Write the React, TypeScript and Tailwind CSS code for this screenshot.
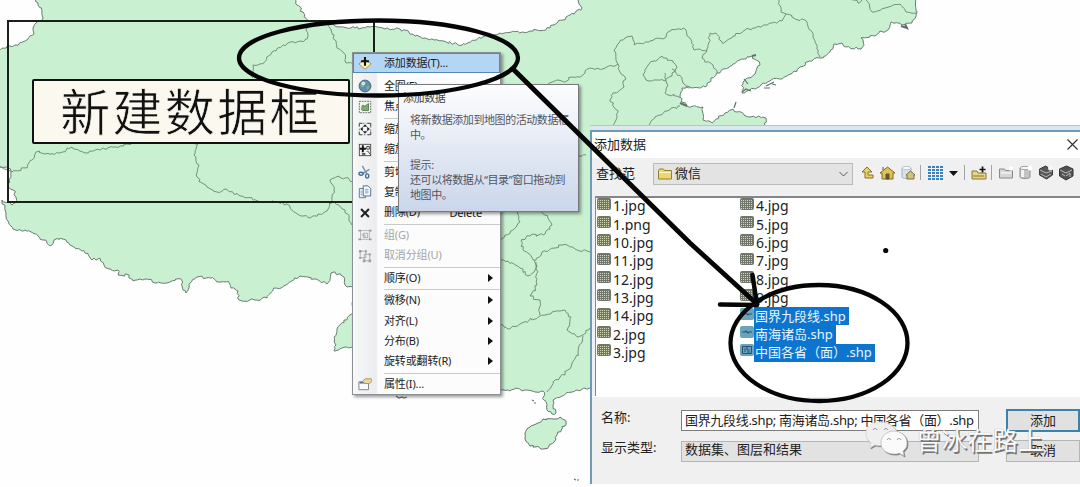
import React from "react";

type Pt = [number, number];

const parse = (s: string): Pt[] => s.trim().split(" ").map((p) => p.split(",").map(Number) as Pt);

// Adds small deterministic wiggles between survey points so borders look natural.
function rough(s: string, amount = 1.8): string {
  const pts = parse(s);
  let seed = pts.length * 7919 + Math.round(pts[0][0] * 31 + pts[0][1] * 17);
  const rnd = () => {
    seed = (seed * 16807) % 2147483647;
    return seed / 2147483647 - 0.5;
  };
  let d = `M${pts[0][0]} ${pts[0][1]}`;
  for (let i = 1; i < pts.length; i++) {
    const [x0, y0] = pts[i - 1];
    const [x1, y1] = pts[i];
    const len = Math.hypot(x1 - x0, y1 - y0);
    const n = len > 90 ? 1 : Math.max(1, Math.round(len / 2.5));
    for (let k = 1; k < n; k++) {
      const t = k / n;
      const x = x0 + (x1 - x0) * t + rnd() * amount * 1.6;
      const y = y0 + (y1 - y0) * t + rnd() * amount * 1.6;
      d += `L${x.toFixed(1)} ${y.toFixed(1)}`;
    }
    d += `L${x1} ${y1}`;
  }
  return d;
}

const land =
  "36,-2 38,5 42,13 43,18 35,24 33,28 34,34 27,40 15,45 -2,50 -2,166 8,168 11,172 8,186 13,190 16,197 17,202 12,205 8,202 2,200 6,213 8,221 13,229 25,230 38,236 43,240 50,246 54,240 60,238 66,240 70,245 85,253 92,260 100,258 104,265 110,269 118,270 118,275 129,275 133,281 140,279 145,279 155,283 170,282 181,279 183,290 186,293 189,288 190,283 197,277 210,278 220,282 228,281 231,288 238,291 239,300 255,300 267,298 273,290 286,285 300,276 315,279 327,284 331,273 335,272 344,277 347,287 354,287 353,313 344,320 337,329 334,337 336,345 334,351 345,347 354,348 400,391 500,390 510,391 516,388 525,390 535,392 543,391 544,400 547,410 552,414 556,413 553,405 553,400 562,396 572,392 590,388 600,388 600,126 765,126 766,118 750,117 737,112 733,109 725,113 712,123 703,120 703,107 687,106 680,97 682,88 687,86 692,88 705,87 711,78 717,73 728,68 740,60 752,56 760,65 755,74 747,78 743,84 742,93 750,90 770,81 787,76 800,67 813,60 820,58 830,52 834,44 842,43 846,47 861,49 864,45 861,38 875,36 880,31 886,31 891,22 902,25 912,23 916,15 916,-2 578,-2 579,4 582,8 570,15 558,22 550,28 530,31 500,33 485,36 462,45 440,41 425,38 412,34 400,29 385,29 370,27 355,28 340,27 322,23 308,21 303,12 297,5 295,-2";

const borders = [
  "307,26 307,39 300,41 288,43 272,52 262,64 253,65 253,78",
  "328,25 336,42 337,48 344,53 346,63 353,64",
  "0,166 10,171 27,168 36,152 50,154 60,153 72,147 85,153 100,150 115,147 127,144 135,143",
  "193,143 198,144 194,155 199,165 197,177 207,187 217,192 226,189 240,196 258,201 278,202 287,204 296,213 303,216 310,218 318,214 327,211 332,200 334,190 330,180 336,177 345,178 353,182",
  "335,203 345,210 349,218 352,225",
  "548,84 558,80 565,82 572,77 580,77 590,68 602,69 618,64 614,50 619,43 625,38 632,36 634,45 650,41 666,37 668,32 683,28 690,38 694,50 707,51 709,42 710,33 716,33 722,43 735,36 745,30 765,25 782,21 786,14 798,20 805,20 813,35 818,50 820,57",
  "779,0 781,12 786,14",
  "707,51 702,58 713,65 717,73",
  "618,64 620,72 625,77 624,87 613,93 610,100 618,112 613,126",
  "643,75 648,65 662,56 673,61 677,68 672,76 665,81 657,80 646,80 643,75",
  "665,73 668,85 665,93 680,98",
  "672,69 682,78 683,83 690,88",
  "649,125 655,117 667,111 680,106",
  "500,240 505,235 513,230 520,222 517,212",
  "540,210 548,218 552,225 545,234 530,236 521,240 523,250 535,260",
  "500,260 508,261 520,268 528,276 534,272 536,260 542,252 555,248 562,245 575,249 590,252",
  "536,262 537,285 530,296 540,300 540,315",
  "500,324 508,329 520,324 540,316 552,312 565,310 571,317 567,330 578,337 583,335 590,328",
  "583,336 578,352 571,367 560,377 553,382 547,392",
  "866,0 872,12 885,8 900,4 906,12 916,13",
  "852,0 858,3 862,0",
  "578,158 582,156 586,155",
];

function MapLayer() {
  return (
    <svg className="absolute inset-0" width="1080" height="487" viewBox="0 0 1080 487" fill="none">
      <path d={rough(land)} fill="#c9f0d1" stroke="#6b7b72" strokeWidth="1" />
      {borders.map((b) => (
        <path key={b} d={rough(b)} stroke="#6c8574" strokeWidth="0.9" />
      ))}
      <path
        d={rough("525,433 530,427 536,424 543,419 553,419 560,417 566,421 565,426 558,432 556,439 549,446 541,449 530,446 525,439 525,433")}
        fill="#c9f0d1"
        stroke="#657269"
      />
      <path d="M396 396l3 2 3-1 2 1 3-1M532 400l2 1M534 403h2M574 479l2 1M577 480h2M764 88h6M772 84l4 1M742 92l4-3 5 2M744 79l4 5M766 86l8-4M734 108l2-6" stroke="#66706a" strokeWidth="1.2" />
      <path d="M901 26l6 2-2-4M680 103l7 3M752 56l4-1" stroke="#66706a" strokeWidth="2" />
    </svg>
  );
}

type IconName =
  | "add" | "globe" | "focus" | "zoomAll" | "zoomSel" | "cut" | "copy" | "delete" | "group" | "ungroup" | "props";

function MenuIcon({ name }: { name: IconName }) {
  const body: Record<IconName, React.ReactNode> = {
    add: (
      <>
        <path d="M1 9l7-5 7 5-7 6z" fill="#fff3c4" stroke="#a8873c" />
        <path d="M8 1v10M3.500 6h9" stroke="#111" strokeWidth="2.4" />
      </>
    ),
    globe: (
      <>
        <circle cx="8" cy="8" r="6.8" fill="#5d8fb5" stroke="#45617c" />
        <path d="M4 5c2-3 5-2 5-1S7 6 7 8s-3 2-4 0zM10 8c2-1 3 0 3 1s-2 4-3 3z" fill="#86b56d" />
        <circle cx="6" cy="5" r="2.2" fill="#e4f1f7" opacity=".8" />
      </>
    ),
    focus: (
      <>
        <rect x="1.500" y="1.500" width="13" height="13" fill="#f1f5ec" stroke="#53614f" strokeDasharray="2 1" />
        <path d="M4 11l1-5 3 1 4-3v8H5z" fill="#78ae6e" stroke="#587b50" />
      </>
    ),
    zoomAll: (
      <>
        <path d="M1.500 5V1.500H5M11 1.500h3.500V5M14.500 11v3.500H11M5 14.500H1.500V11" stroke="#222" />
        <rect x="1.500" y="1.500" width="13" height="13" stroke="#777" strokeDasharray="2 2" />
        <path d="M8 2.500l2.500 3h-5zM8 13.500l2.500-3h-5zM2.500 8l3-2.500v5zM13.500 8l-3-2.500v5z" fill="#222" />
      </>
    ),
    zoomSel: (
      <>
        <rect x="1.500" y="1.500" width="13" height="13" fill="#f3f3f3" stroke="#444" />
        <path d="M5.500 2.500v8M2 6.500h7" stroke="#111" strokeWidth="2.2" />
        <path d="M10 4h3v3h-3zM10 10l1-1 3 4M5 12h3v1.500H5z" stroke="#333" />
      </>
    ),
    cut: (
      <>
        <path d="M5 1l5 9M13 5l-8 5" stroke="#7e93a6" strokeWidth="1.700" />
        <ellipse cx="3.500" cy="10" rx="2.500" ry="1.700" stroke="#3d719c" strokeWidth="1.500" />
        <ellipse cx="10.500" cy="12.500" rx="1.800" ry="2.400" stroke="#3d719c" strokeWidth="1.500" />
      </>
    ),
    copy: (
      <>
        <path d="M1.500 4h7v10.500h-7z" fill="#eaf3fb" stroke="#52718f" />
        <path d="M6 1h5.500l3 3v8.500H6z" fill="#f6fbff" stroke="#3f648a" />
        <path d="M8 5h4M8 7h4M8 9h4M3 7h2M3 9h2M3 11h2" stroke="#6e9ac4" />
      </>
    ),
    delete: <path d="M3.500 3.500l9 9M12.500 3.500l-9 9" stroke="#222" strokeWidth="2.300" />,
    group: (
      <>
        <rect x="3" y="3" width="10" height="10" stroke="#b5b5b5" />
        <path d="M6 6h5v5H6zM4 8h4v3" stroke="#a3a3a3" />
        <path d="M.500 2h3v2h-3zM12.500 2h3v2h-3zM.500 12h3v2h-3zM12.500 12h3v2h-3z" fill="#999" />
      </>
    ),
    ungroup: (
      <>
        <path d="M2.500 2.500H9V10H2.500zM7 6h6.500v7.500H7z" stroke="#a8a8a8" />
        <path d="M1 1h3v3H1zM8 1h2v3H8zM1 9h3v2H1zM12 5h3v2h-3zM5.500 12h3v3h-3zM12 12h3v3h-3z" fill="#a0a0a0" />
      </>
    ),
    props: (
      <>
        <path d="M1 5.500h11v9H1z" fill="#fafafa" stroke="#777" />
        <path d="M2 6.500h9" stroke="#5b6f95" strokeWidth="2" />
        <path d="M5 5l3-3h7l1 3-3 2.500H8z" fill="#ead69a" stroke="#a89257" />
      </>
    ),
  };
  return (
    <svg width="14" height="14" viewBox="0 0 16 16" fill="none" className="shrink-0">
      {body[name]}
    </svg>
  );
}

type Entry = { label: string; icon?: IconName; disabled?: boolean; sub?: boolean; shortcut?: string } | "sep";

const entries: Entry[] = [
  { label: "全图(F)", icon: "globe" },
  { label: "焦点数据框(D)", icon: "focus" },
  "sep",
  { label: "缩放整个页面", icon: "zoomAll" },
  { label: "缩放至所选元素", icon: "zoomSel" },
  "sep",
  { label: "剪切(T)", icon: "cut" },
  { label: "复制(C)", icon: "copy" },
  { label: "删除(D)", icon: "delete", shortcut: "Delete" },
  "sep",
  { label: "组(G)", icon: "group", disabled: true },
  { label: "取消分组(U)", icon: "ungroup", disabled: true },
  "sep",
  { label: "顺序(O)", sub: true },
  "sep",
  { label: "微移(N)", sub: true },
  { label: "对齐(L)", sub: true },
  { label: "分布(B)", sub: true },
  { label: "旋转或翻转(R)", sub: true },
  "sep",
  { label: "属性(I)...", icon: "props" },
];

function ContextMenu() {
  return (
    <div className="absolute left-[352px] top-[52px] h-[343px] w-[149px] border border-[#8c8f94] bg-[#fcfcfc] bg-[linear-gradient(90deg,#f8f8f8_0,#ebecee_23px,#fcfcfc_25px)] text-[11px] leading-none tracking-[-0.15px] text-[#222] shadow-[2px_2px_3px_rgba(0,0,0,0.4)]">
      <div className="mb-[3px] flex h-[20.25px] items-center border border-[#5487b5] bg-[#b3d6f5]">
        <span className="flex w-[30px] pl-[4px]"><MenuIcon name="add" /></span>
        <span className="pb-px">添加数据(T)...</span>
      </div>
      {entries.map((e, i) =>
        e === "sep" ? (
          <div key={i} className="ml-[31px] h-[2.4px] pt-px"><div className="h-px bg-[#c9cacc]" /></div>
        ) : (
          <div key={i} className={`flex h-[20.25px] items-center whitespace-nowrap ${e.disabled ? "text-[#a5a5a5]" : ""}`}>
            <span className="flex w-[31px] shrink-0 pl-[5px]">{e.icon && <MenuIcon name={e.icon} />}</span>
            <span className="pb-[2px]">{e.label}</span>
            {e.shortcut && <span className="ml-auto mr-[18px] pb-px">{e.shortcut}</span>}
            {e.sub && (
              <svg className="mb-px ml-auto mr-[7px]" width="5" height="8" viewBox="0 0 5 8"><path d="M0 0l5 4-5 4z" fill="#111" /></svg>
            )}
          </div>
        ),
      )}
    </div>
  );
}

function Tooltip() {
  return (
    <div className="absolute left-[398px] top-[84px] h-[128px] w-[181px] border border-[#77797f] bg-linear-to-b from-[#fdfdfe] to-[#cad6ea] pl-1 pt-[5px] text-[11px] text-[#50555f] shadow-[2px_2px_3px_rgba(0,0,0,0.4)]">
      <div className="h-[15px] leading-[15px] tracking-[-0.4px] text-[#444]">添加数据</div>
      <div className="whitespace-nowrap pl-[7px] pt-[7px] leading-[15px] tracking-[-0.43px]">
        <p>将新数据添加到地图的活动数据框</p>
        <p>中。</p>
        <p className="mt-[15px]">提示:</p>
        <p>还可以将数据从“目录”窗口拖动到</p>
        <p>地图中。</p>
      </div>
    </div>
  );
}

function RasterIcon() {
  return (
    <svg width="14" height="12" viewBox="0 0 14 12" className="mb-[5px] shrink-0">
      <rect width="14" height="12" rx="2" fill="#70776a" />
      <path d="M1 2.500h12M1 4.500h12M1 6.500h12M1 8.500h12M1 10.500h12" stroke="#d3d6b4" strokeDasharray="1 1" />
    </svg>
  );
}

function ShapeIcon({ kind }: { kind: "line" | "area" }) {
  return (
    <svg width="14" height="12" viewBox="0 0 14 12" className="mb-[5px] shrink-0" fill="none">
      <rect width="14" height="12" rx="2" fill="#6aa3bd" />
      {kind === "line" ? (
        <path d="M2 6h3l1-1 2 2 1-1h3" stroke="#24536f" strokeWidth="1.2" />
      ) : (
        <path d="M2.500 2.500h9v7h-9zM5 4v4M7 3v3h3M7 8h3" stroke="#24536f" />
      )}
    </svg>
  );
}

const columnA = ["1.jpg", "1.png", "10.jpg", "11.jpg", "12.jpg", "13.jpg", "14.jpg", "2.jpg", "3.jpg"];
const columnB = ["4.jpg", "5.jpg", "6.jpg", "7.jpg", "8.jpg", "9.jpg"];
const selected: { name: string; kind: "line" | "area"; cls: string }[] = [
  { name: "国界九段线.shp", kind: "line", cls: "w-[95px]" },
  { name: "南海诸岛.shp", kind: "line", cls: "w-[82px]" },
  { name: "中国各省（面）.shp", kind: "area", cls: "w-[121px]" },
];

function FileRow({ name }: { name: string }) {
  return (
    <div className="flex h-[18.35px] items-center gap-[2px] text-[14px]">
      <RasterIcon />
      <span>{name}</span>
    </div>
  );
}

function FolderIcon() {
  return (
    <svg width="14" height="12" viewBox="0 0 14 12">
      <path d="M.5 2.500l1-1.500h4l1 1.500h7v8.500H.5z" fill="#e9d775" stroke="#94802f" />
      <path d="M1 4.500h12" stroke="#fff6ba" />
    </svg>
  );
}

function ToolbarIcons() {
  return (
    <svg width="220" height="22" viewBox="860 163 220 22" fill="none" className="ml-[7px] shrink-0">
      <path d="M867 167l-5 5h3v6h8v-3h-5v-3h4z" fill="#ead260" stroke="#85712c" strokeLinejoin="round" />
      <path d="M880 173l7.500-6 7.500 6h-2v6h-11v-6z" fill="#dcc25b" stroke="#7f682b" />
      <path d="M883 167v3M886 174h3v5h-3z" fill="#6b5222" stroke="#6b5222" />
      <path d="M902 168v9c0 2 9 2 9 0v-9" fill="#d5e2ea" stroke="#a7b5be" />
      <ellipse cx="906.500" cy="168" rx="4.500" ry="1.700" fill="#f8fbfc" stroke="#b9c4ca" />
      <path d="M906 175l4.500-4 4.500 4h-1v4h-7v-4z" fill="#d2c178" stroke="#797145" />
      <path d="M920.500 165v15M964.500 165v15M991.500 165v15" stroke="#a3a3a3" />
      <path d="M928 167h15M928 170h15M928 173h15M928 176h15M928 179h15" stroke="#3c82b8" strokeWidth="1.800" strokeDasharray="3 1" />
      <path d="M949 171h9l-4.500 5z" fill="#111" />
      <path d="M972 171h5l1 2h8v6h-14z" fill="#e7d48b" stroke="#8b7530" />
      <path d="M973 176h11" stroke="#8b7530" />
      <path d="M982.500 166.500v6M979.500 169.500h6" stroke="#111" strokeWidth="1.700" />
      <path d="M999.500 178v-9h5l1 1.500h7v7.500z" fill="#d7d7d7" stroke="#8a8a8a" />
      <path d="M1001 173h10" stroke="#fff" />
      <circle cx="1011" cy="168.500" r="2.300" fill="#fff" />
      <path d="M1020 168v9c0 2 10 2 10 0v-9" fill="#c3c3c3" stroke="#8f8f8f" />
      <path d="M1021 169h3v8h-3z" fill="#f3f3f3" />
      <ellipse cx="1025" cy="168" rx="5" ry="1.700" fill="#f9f9f9" stroke="#a0a0a0" />
      <circle cx="1030" cy="168" r="2.500" fill="#fff" />
      <path d="M1039.500 169l6-3 7 4v5l-6 4-7-4z" fill="#585858" stroke="#3d3d3d" />
      <path d="M1040 170l6 3 6-2M1041 174l5 3 5-3" stroke="#b7b7b7" />
      <circle cx="1050.500" cy="168" r="2.500" fill="#f6f6f6" />
      <path d="M1059.500 169l7-3 6.500 3v7l-7 4-6.500-4z" fill="#515151" stroke="#343434" />
      <path d="M1060 170l6 3 6-3M1062 174l3 2M1066 176l4-3v4" stroke="#bfbfbf" />
    </svg>
  );
}

function Dialog() {
  return (
    <div className="absolute left-[590px] top-[125px] w-[490px] text-[13px] leading-none text-[#222]">
      <div className="h-[5px] border-t border-[#b8c4ca] bg-[#dce8ed]" />
      <div className="flex h-[354px] flex-col border-l-2 border-t-2 border-[#6d9ab5] bg-[#f0f0f0]">
        <div className="flex h-[26px] items-center justify-between bg-white pb-[2px] pl-[2px] pr-[2px]">
          <span>添加数据</span>
          <svg width="11" height="11" viewBox="0 0 11 11"><path d="M.5.500l10 10M10.500.500l-10 10" stroke="#333" strokeWidth="1.200" /></svg>
        </div>
        <div className="flex h-[38px] items-center pb-[6px] pl-[4px]">
          <span className="w-[57px] pb-[2px]">查找范</span>
          <div className="flex h-[22px] w-[200px] shrink-0 items-center gap-[3px] border border-[#bbb] bg-[#e3e3e3] pl-[4px] pr-1">
            <FolderIcon />
            <span className="pb-[2px]">微信</span>
            <svg className="ml-auto" width="9" height="6" viewBox="0 0 9 6" fill="none"><path d="M.5 1l4 4 4-4" stroke="#555" /></svg>
          </div>
          <ToolbarIcons />
        </div>
        <div className="ml-[3px] flex h-[200px] shrink-0 border-l border-t-2 border-[#86868a] bg-white pl-px">
          <div className="-mt-px w-[143px]">
            {columnA.map((n) => <FileRow key={n} name={n} />)}
          </div>
          <div className="-mt-px">
            {columnB.map((n) => <FileRow key={n} name={n} />)}
            {selected.map((s) => (
              <div key={s.name} className="flex h-[18.35px] items-center">
                <ShapeIcon kind={s.kind} />
                <span className={`flex h-full items-center whitespace-nowrap bg-[#0c75d0] pl-[1px] text-[13px] text-[#eaf5ff] ${s.cls}`}>{s.name}</span>
              </div>
            ))}
          </div>
        </div>
        <div className="flex flex-1 flex-col gap-[8px] border-t border-white pl-[9px] pt-[12px]">
          <div className="flex h-[23px] items-center">
            <span className="w-[80px] shrink-0 pb-[7px]">名称:</span>
            <div className="flex h-[21px] w-[298px] shrink-0 items-center whitespace-nowrap border border-[#7d7d7d] bg-white pb-px pl-[3px] tracking-[-0.32px]">
              国界九段线.shp; 南海诸岛.shp; 中国各省（面）.shp
            </div>
            <button className="ml-[27px] h-[23px] flex-1 border-2 border-[#3b83ad] bg-[#e1e1e1] pb-px">添加</button>
          </div>
          <div className="flex h-[22px] items-center">
            <span className="w-[80px] shrink-0 pb-[8px]">显示类型:</span>
            <div className="flex h-[21px] w-[298px] shrink-0 items-center border border-[#b5b5b5] bg-[#e2e2e2] pb-[3px] pl-[3px]">数据集、图层和结果</div>
            <button className="ml-[27px] h-[22px] flex-1 border border-[#b5b5b5] bg-[#e1e1e1] pb-px">取消</button>
          </div>
        </div>
      </div>
    </div>
  );
}

function Watermark() {
  return (
    <div className="absolute left-[865px] top-[421px] flex items-center">
      <svg width="44" height="37" viewBox="0 0 44 37" className="drop-shadow-[1px_1px_0.500px_#777]">
        <path d="M15 1C7 1 1 6 1 13c0 4 2 7 5 9l-1 5 5-3c3 1 6 1 9 0 0-9 6-13 13-13C29 4 22 1 15 1z" fill="#f7f7f7" fillOpacity=".93" stroke="#ccc" strokeWidth=".6" />
        <path d="M29 10c-7 0-13 5-13 12s6 11 13 11c2 0 4 0 5-1l5 3-1-5c3-2 4-5 4-8 0-7-6-12-13-12z" fill="#fafafa" stroke="#b8b8b8" strokeWidth=".7" />
        <path d="M8 9c1-2 3-2 4 0M19 9c1-2 3-2 4 0M22 19c1-2 3-2 4 0M32 19c1-2 3-2 4 0" stroke="#888" fill="none" />
      </svg>
      <span className="ml-[7px] text-[25.5px] leading-[32px] text-[#fafafa] [text-shadow:1.5px_1.5px_0.5px_#777,0_0_1px_#999]">曾冰在路上</span>
    </div>
  );
}

function Annotations() {
  return (
    <svg className="absolute inset-0" width="1080" height="487" viewBox="0 0 1080 487" fill="none" stroke="#050505" strokeLinecap="round">
      <ellipse cx="378.500" cy="58" rx="139.500" ry="37.500" strokeWidth="4.300" />
      <path d="M513 69L580 135L690 243L757 304" strokeWidth="4.800" />
      <path d="M720 304.500L757 305M752.500 275L757 305" strokeWidth="4.500" />
      <ellipse cx="819" cy="343" rx="88.500" ry="58" strokeWidth="4.300" />
      <circle cx="885.700" cy="250.500" r="2.600" fill="#050505" stroke="none" />
    </svg>
  );
}

export default function App() {
  return (
    <div className="relative h-[487px] w-[1080px] overflow-hidden bg-[#fefefe] font-['Noto_Sans','Noto_Sans_CJK_SC',sans-serif]">
      <MapLayer />
      <div className="absolute left-[7px] top-[20px] h-[183px] w-[368px] border-2 border-[#182018]" />
      <div className="absolute left-[32px] top-[79px] flex h-[65px] w-[318px] items-center justify-center rounded-[2px] border-2 border-[#111] bg-[#fbf8f0]">
        <span className="whitespace-nowrap text-[50px] leading-none tracking-[2.3px] text-[#111] [-webkit-text-stroke:0.7px_#fbf8f0]">新建数据框</span>
      </div>
      <ContextMenu />
      <Tooltip />
      <Dialog />
      <Annotations />
      <Watermark />
    </div>
  );
}
